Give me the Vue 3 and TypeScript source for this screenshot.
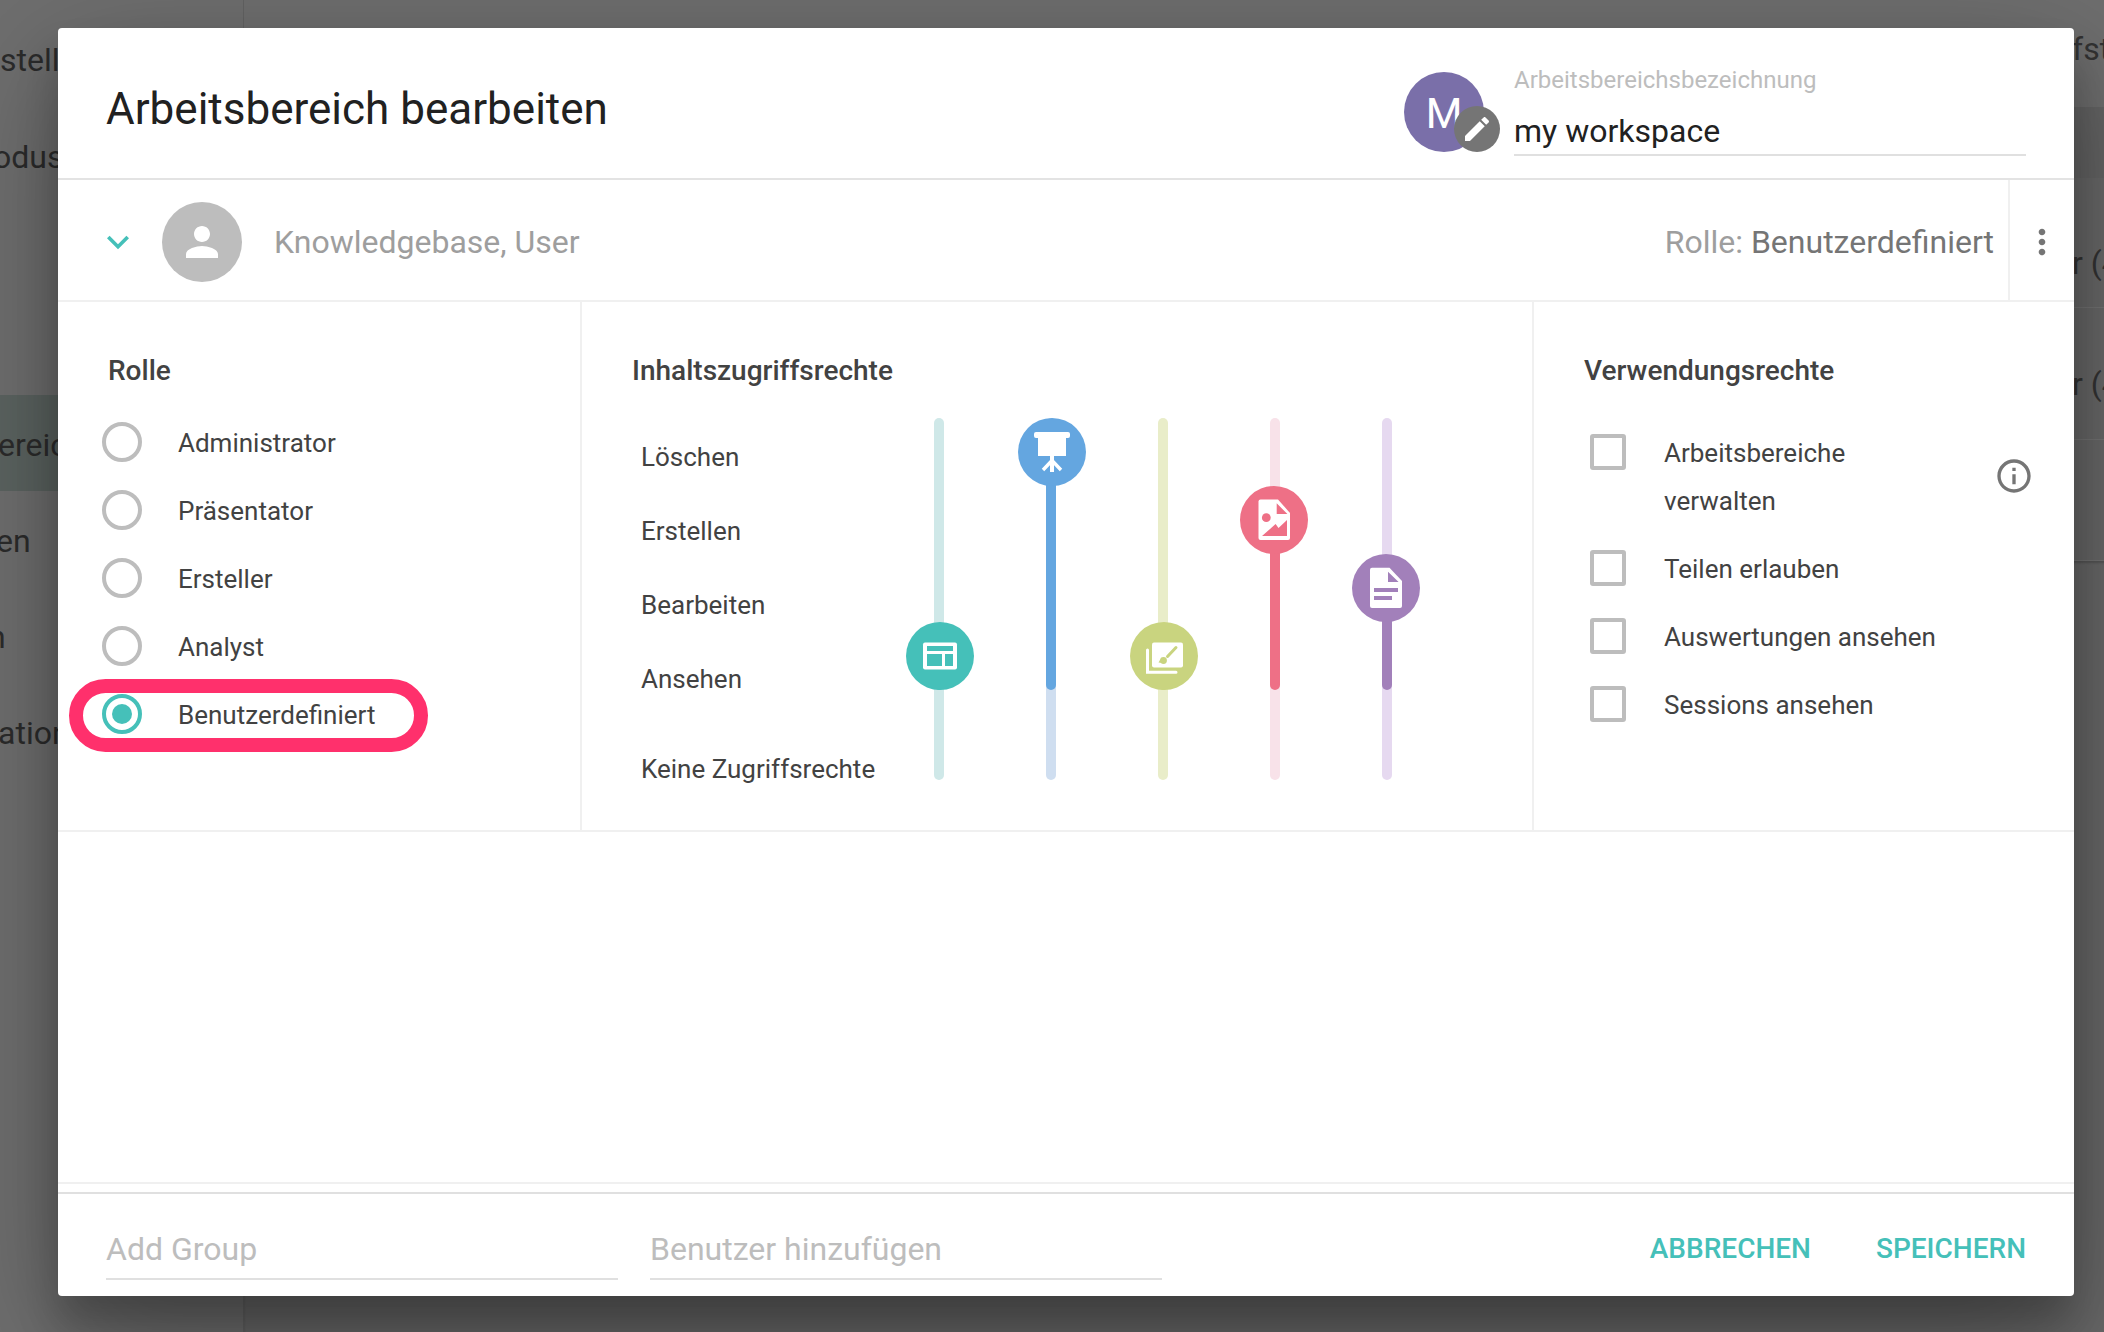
<script setup lang="ts">
type SliderIcon = 'layout' | 'board' | 'brush' | 'image' | 'doc';

interface Slider {
  icon: SliderIcon;
  level: number;
  color: string;
  track: string;
  nudge: number;
}

const sideItems = [
  { text: 'stell', shift: 0 },
  { text: 'odus', shift: -7 },
  { text: '', shift: 0 },
  { text: '', shift: 0 },
  { text: 'ereic', shift: -2, active: true },
  { text: 'en', shift: -4 },
  { text: 'n', shift: -12 },
  { text: 'ation', shift: -2 },
];

const roles = ['Administrator', 'Präsentator', 'Ersteller', 'Analyst', 'Benutzerdefiniert'];
const selectedRole = 'Benutzerdefiniert';

const accessLevels = ['Löschen', 'Erstellen', 'Bearbeiten', 'Ansehen', 'Keine Zugriffsrechte'];

const sliders: Slider[] = [
  { icon: 'layout', level: 3, color: '#45c0b9', track: '#cfe8e8', nudge: -28 },
  { icon: 'board', level: 0, color: '#64a6e0', track: '#cfdef0', nudge: -28 },
  { icon: 'brush', level: 3, color: '#c9d47f', track: '#e9edc9', nudge: -28 },
  { icon: 'image', level: 1, color: '#ee7086', track: '#f8e2e9', nudge: -30 },
  { icon: 'doc', level: 2, color: '#a280ba', track: '#e6d9f0', nudge: -30 },
];

// handle is 68px and moves one handle height per level, fill always ends at 272
const handleTop = (s: Slider) => `${s.level * 68}px`;
const fillTop = (s: Slider) => `${s.level * 68 + 34}px`;

const usage = ['Teilen erlauben', 'Auswertungen ansehen', 'Sessions ansehen'];
</script>

<template>
  <div class="page">
    <aside class="side">
      <div
        v-for="(item, i) in sideItems"
        :key="i"
        class="side-item"
        :class="{ 'side-item--active': item.active }"
      >
        <span :style="{ marginLeft: item.shift + 'px' }">{{ item.text }}</span>
      </div>
    </aside>
    <main class="back">
      <div class="back-head"><span>fst</span></div>
      <div class="back-band"></div>
      <div class="back-row"><span>r (4</span></div>
      <div class="back-row"><span>r (4</span></div>
      <div class="back-row back-row--empty"></div>
      <div class="back-rest"></div>
    </main>

    <section class="dialog">
      <header class="dialog-head">
        <h1 class="title">Arbeitsbereich bearbeiten</h1>
        <div class="ws-avatar">
          M
          <span class="ws-edit">
            <svg viewBox="0 0 24 24" width="32" height="32">
              <path
                fill="#fff"
                d="M3 17.25V21h3.75L17.81 9.94l-3.75-3.75L3 17.25zM20.71 7.04c.39-.39.39-1.02 0-1.41l-2.34-2.34c-.39-.39-1.02-.39-1.41 0l-1.83 1.83 3.75 3.75 1.83-1.83z"
              />
            </svg>
          </span>
        </div>
        <div class="ws-field">
          <div class="ws-label">Arbeitsbereichsbezeichnung</div>
          <div class="ws-value">my workspace</div>
        </div>
      </header>

      <div class="user-row">
        <svg class="chevron" viewBox="0 0 24 24" width="44" height="44">
          <path fill="#45c0b9" d="M16.59 8.59L12 13.17 7.41 8.59 6 10l6 6 6-6z" />
        </svg>
        <div class="user-avatar">
          <svg viewBox="0 0 24 24" width="48" height="48">
            <path
              fill="#fff"
              d="M12 12c2.21 0 4-1.79 4-4s-1.79-4-4-4-4 1.79-4 4 1.79 4 4 4zm0 2c-2.67 0-8 1.34-8 4v2h16v-2c0-2.66-5.33-4-8-4z"
            />
          </svg>
        </div>
        <div class="user-name">Knowledgebase, User</div>
        <div class="user-role">Rolle: <b>Benutzerdefiniert</b></div>
        <div class="user-menu">
          <svg viewBox="0 0 24 24" width="40" height="40">
            <path
              fill="#757575"
              d="M12 8c1.1 0 2-.9 2-2s-.9-2-2-2-2 .9-2 2 .9 2 2 2zm0 2c-1.1 0-2 .9-2 2s.9 2 2 2 2-.9 2-2-.9-2-2-2zm0 6c-1.1 0-2 .9-2 2s.9 2 2 2 2-.9 2-2-.9-2-2-2z"
            />
          </svg>
        </div>
      </div>

      <div class="panels">
        <div class="panel panel--role">
          <h2 class="panel-title">Rolle</h2>
          <div class="radio-list">
            <div v-for="role in roles" :key="role" class="radio-row">
              <span class="radio" :class="{ 'radio--on': role === selectedRole }"></span>
              <span class="radio-text">{{ role }}</span>
              <span v-if="role === selectedRole" class="marker"></span>
            </div>
          </div>
        </div>

        <div class="panel panel--access">
          <h2 class="panel-title">Inhaltszugriffsrechte</h2>
          <div class="access">
            <ul class="levels">
              <li v-for="level in accessLevels" :key="level">{{ level }}</li>
            </ul>
            <div class="sliders">
              <div v-for="s in sliders" :key="s.icon" class="slider">
                <div class="track" :style="{ background: s.track }">
                  <div class="fill" :style="{ top: fillTop(s), background: s.color }"></div>
                  <div
                    class="handle"
                    :style="{ top: handleTop(s), left: s.nudge + 'px', background: s.color }"
                  >
                    <svg viewBox="0 0 68 68" width="68" height="68">
                      <template v-if="s.icon === 'layout'">
                        <rect x="17" y="20.5" width="34" height="27" rx="2" fill="#fff" />
                        <path :fill="s.color" d="M21 24h26v5H21zM21 32h15v12H21zM39 32h8v12h-8z" />
                      </template>
                      <template v-else-if="s.icon === 'board'">
                        <rect x="16" y="14" width="36" height="6" rx="2" fill="#fff" />
                        <path fill="#fff" d="M20 19h28v19H20zM32 38h4v16h-4z" />
                        <path stroke="#fff" stroke-width="3.4" fill="none" d="M34 42.5 25 52M34 42.5 43 52" />
                      </template>
                      <template v-else-if="s.icon === 'brush'">
                        <rect x="22" y="20.5" width="31" height="25" rx="2" fill="#fff" />
                        <path stroke="#fff" stroke-width="3" fill="none" d="M17.5 28v22.2H46" stroke-linecap="round" />
                        <path :stroke="s.color" stroke-width="3" fill="none" d="M46 25.5 37.5 34.5" stroke-linecap="round" />
                        <circle cx="33.5" cy="38.5" r="3.4" :fill="s.color" />
                        <path :fill="s.color" d="M30.5 37l2 4-4-.4z" />
                      </template>
                      <template v-else-if="s.icon === 'image'">
                        <path fill="#fff" d="M20.5 13.5H38L50 27v25a2 2 0 0 1-2 2H20.5a2 2 0 0 1-2-2V15.5a2 2 0 0 1 2-2z" />
                        <path :fill="s.color" d="M36.7 17.3 47.4 28H36.7zM22 50l13.6-12 2.9 4L47 34v16z" />
                        <circle cx="26.3" cy="31.7" r="4.4" :fill="s.color" />
                      </template>
                      <template v-else>
                        <path fill="#fff" d="M20 13.7h17.5L50 27v25a2 2 0 0 1-2 2H20a2 2 0 0 1-2-2V15.7a2 2 0 0 1 2-2z" />
                        <path :fill="s.color" d="M36 17.7 46.6 28H36zM22 34h24v4H22zM22 42h18v4H22z" />
                      </template>
                    </svg>
                  </div>
                </div>
              </div>
            </div>
          </div>
        </div>

        <div class="panel panel--usage">
          <h2 class="panel-title">Verwendungsrechte</h2>
          <div class="check-list">
            <div class="check-row">
              <span class="check"></span>
              <span class="check-wrap">Arbeitsbereiche verwalten</span>
              <svg class="info" viewBox="0 0 24 24" width="40" height="40">
                <path
                  fill="#757575"
                  d="M11 7h2v2h-2zm0 4h2v6h-2zm1-9C6.48 2 2 6.48 2 12s4.48 10 10 10 10-4.48 10-10S17.52 2 12 2zm0 18c-4.41 0-8-3.59-8-8s3.59-8 8-8 8 3.59 8 8-3.59 8-8 8z"
                />
              </svg>
            </div>
            <div v-for="item in usage" :key="item" class="check-row">
              <span class="check"></span>
              <span>{{ item }}</span>
            </div>
          </div>
        </div>
      </div>

      <div class="spacer"></div>

      <footer class="dialog-foot">
        <div class="foot-input">Add Group</div>
        <div class="foot-input">Benutzer hinzufügen</div>
        <div class="foot-actions">
          <span class="btn">ABBRECHEN</span>
          <span class="btn">SPEICHERN</span>
        </div>
      </footer>
    </section>
  </div>
</template>

<style>
html,
body {
  margin: 0;
  background: #6e6e6e;
  overflow: hidden;
}
</style>

<style scoped>
.page {
  position: relative;
  display: flex;
  width: 2104px;
  height: 1332px;
  overflow: hidden;
  background: #6e6e6e;
  font-family: Roboto, 'Liberation Sans', sans-serif;
  color: #424242;
}

/* dimmed app behind the dialog */
.side {
  flex: none;
  width: 243px;
  border-right: 1px solid #626262;
  overflow: hidden;
}

.side-item {
  display: flex;
  align-items: center;
  height: 96px;
  padding-top: 4px;
  box-sizing: border-box;
  font-size: 32px;
  color: #2b2b2b;
  white-space: nowrap;
}

.side-item:first-child {
  height: 109px;
  padding-top: 11px;
}

.side-item:nth-child(2) {
  padding-top: 0;
}

.side-item:nth-child(3),
.side-item:nth-child(4) {
  height: 95px;
}

.side-item--active {
  background: #5b6360;
}

.back {
  flex: 1;
  display: flex;
  flex-direction: column;
  font-size: 32px;
  color: #333;
  white-space: nowrap;
}

.back span {
  margin-left: 1828px;
}

.back-head {
  display: flex;
  align-items: center;
  height: 107px;
  padding-bottom: 10px;
  box-sizing: border-box;
}

.back-band {
  height: 71px;
  background: #646464;
}

.back-row {
  display: flex;
  align-items: center;
  height: 130px;
  border-bottom: 1px solid #737373;
  box-sizing: border-box;
  padding-top: 40px;
  background: #686868;
}

.back-row + .back-row {
  height: 132px;
  padding-top: 20px;
}

.back-row--empty {
  height: 121px !important;
}

.back-rest {
  flex: 1;
  background: #686868;
  box-shadow: inset 0 2px 2px #565656;
}

.dialog {
  position: absolute;
  left: 58px;
  top: 28px;
  display: flex;
  flex-direction: column;
  width: 2016px;
  height: 1268px;
  background: #fff;
  border-radius: 4px;
  box-shadow: 0 38px 120px rgba(0, 0, 0, 0.3), 0 30px 40px rgba(0, 0, 0, 0.22);
}

.dialog-head {
  display: flex;
  align-items: flex-start;
  height: 150px;
  flex: none;
  padding: 0 48px;
  border-bottom: 2px solid #e3e3e3;
}

.title {
  flex: 1;
  margin: 55px 0 0;
  font-size: 44px;
  line-height: 52px;
  font-weight: 400;
  color: #212121;
}

.ws-avatar {
  position: relative;
  display: flex;
  align-items: center;
  justify-content: center;
  width: 80px;
  height: 80px;
  margin: 44px 30px 0 0;
  padding-top: 2px;
  box-sizing: border-box;
  border-radius: 50%;
  background: #7a6fa9;
  color: #fff;
  font-size: 42px;
}

.ws-edit {
  position: absolute;
  right: -16px;
  bottom: 0;
  display: flex;
  align-items: center;
  justify-content: center;
  width: 46px;
  height: 46px;
  border-radius: 50%;
  background: #757575;
}

.ws-field {
  width: 512px;
  margin-top: 38px;
  border-bottom: 2px solid #e0e0e0;
}

.ws-label {
  font-size: 24px;
  line-height: 28px;
  color: #bdbdbd;
}

.ws-value {
  margin-top: 17px;
  padding-bottom: 3px;
  font-size: 32px;
  line-height: 40px;
  color: #212121;
}

.user-row {
  display: flex;
  align-items: center;
  flex: none;
  height: 116px;
  padding-top: 4px;
  border-bottom: 2px solid #f0f0f0;
}

.chevron {
  flex: none;
  margin: 0 22px 0 38px;
}

.user-avatar {
  display: flex;
  align-items: center;
  justify-content: center;
  flex: none;
  width: 80px;
  height: 80px;
  border-radius: 50%;
  background: #bdbdbd;
}

.user-name {
  flex: 1;
  margin-left: 32px;
  font-size: 32px;
  color: #9e9e9e;
}

.user-role {
  margin-right: 14px;
  font-size: 32px;
  color: #9e9e9e;
}

.user-role b {
  font-weight: 400;
  color: #757575;
}

.user-menu {
  display: flex;
  align-items: center;
  justify-content: center;
  flex: none;
  align-self: stretch;
  width: 64px;
  margin-top: -4px;
  padding-top: 4px;
  border-left: 2px solid #f0f0f0;
}

.panels {
  display: flex;
  flex: none;
  height: 528px;
  border-bottom: 2px solid #f0f0f0;
  font-size: 26px;
}

.panel {
  padding-top: 53px;
  box-sizing: border-box;
}

.panel--role {
  flex: none;
  width: 524px;
  padding-left: 50px;
  border-right: 2px solid #f0f0f0;
}

.panel--access {
  flex: none;
  width: 952px;
  padding-left: 50px;
  border-right: 2px solid #f0f0f0;
}

.panel--usage {
  flex: 1;
  padding-left: 50px;
}

.panel-title {
  margin: 0;
  font-size: 28px;
  line-height: 32px;
  font-weight: 500;
  color: #424242;
}

.radio-list {
  margin: 21px 0 0 -6px;
}

.radio-row {
  position: relative;
  display: flex;
  align-items: center;
  gap: 36px;
  height: 68px;
}

.radio-text {
  padding-top: 2px;
}

.radio {
  display: flex;
  align-items: center;
  justify-content: center;
  flex: none;
  width: 40px;
  height: 40px;
  box-sizing: border-box;
  border: 4px solid #bdbdbd;
  border-radius: 50%;
}

.radio--on {
  border-color: #45c0b9;
}

.radio--on::after {
  content: '';
  width: 20px;
  height: 20px;
  border-radius: 50%;
  background: #45c0b9;
}

/* annotation ring drawn over the selected role */
.marker {
  position: absolute;
  left: -33px;
  top: -1px;
  width: 359px;
  height: 73px;
  box-sizing: border-box;
  border: 14px solid #ff306c;
  border-radius: 37px;
}

.access {
  display: flex;
  margin-top: 31px;
}

.levels {
  flex: none;
  width: 251px;
  box-sizing: border-box;
  margin: 2px 0 0;
  padding: 0 0 0 9px;
  list-style: none;
}

.levels li {
  height: 74px;
  line-height: 74px;
  white-space: nowrap;
}

.levels li:last-child {
  margin-top: 16px;
}

.sliders {
  display: flex;
}

.slider {
  display: flex;
  justify-content: center;
  width: 112px;
}

.track {
  position: relative;
  width: 10px;
  height: 362px;
  border-radius: 5px;
}

.fill {
  position: absolute;
  left: 0;
  right: 0;
  bottom: 90px;
  border-radius: 0 0 5px 5px;
}

.handle {
  position: absolute;
  width: 68px;
  height: 68px;
  border-radius: 50%;
}

.handle svg {
  display: block;
}

.check-list {
  display: flex;
  flex-direction: column;
  gap: 20px;
  margin-top: 42px;
}

.check-row {
  display: flex;
  align-items: flex-start;
  gap: 38px;
  margin-left: 6px;
  line-height: 48px;
}

.check {
  flex: none;
  width: 36px;
  height: 36px;
  margin-top: 5px;
  box-sizing: border-box;
  border: 4px solid #bdbdbd;
  border-radius: 3px;
}

.check-wrap {
  width: 260px;
}

.info {
  flex: none;
  align-self: center;
  margin: -2px 40px 0 auto;
}

.spacer {
  flex: 1;
}

.dialog-foot {
  display: flex;
  align-items: flex-end;
  flex: none;
  gap: 32px;
  height: 104px;
  padding: 0 48px 16px 48px;
  box-sizing: border-box;
  border-top: 2px solid #e0e0e0;
  position: relative;
}

.dialog-foot::before {
  content: '';
  position: absolute;
  left: 0;
  right: 0;
  top: -12px;
  height: 2px;
  background: #f0f0f0;
}

.foot-input {
  width: 512px;
  padding-bottom: 9px;
  border-bottom: 2px solid #e0e0e0;
  font-size: 32px;
  line-height: 40px;
  color: #bdbdbd;
}

.foot-actions {
  display: flex;
  gap: 65px;
  margin-left: auto;
  padding-bottom: 13px;
}

.btn {
  font-size: 28px;
  line-height: 36px;
  font-weight: 500;
  color: #45c0b9;
}
</style>
